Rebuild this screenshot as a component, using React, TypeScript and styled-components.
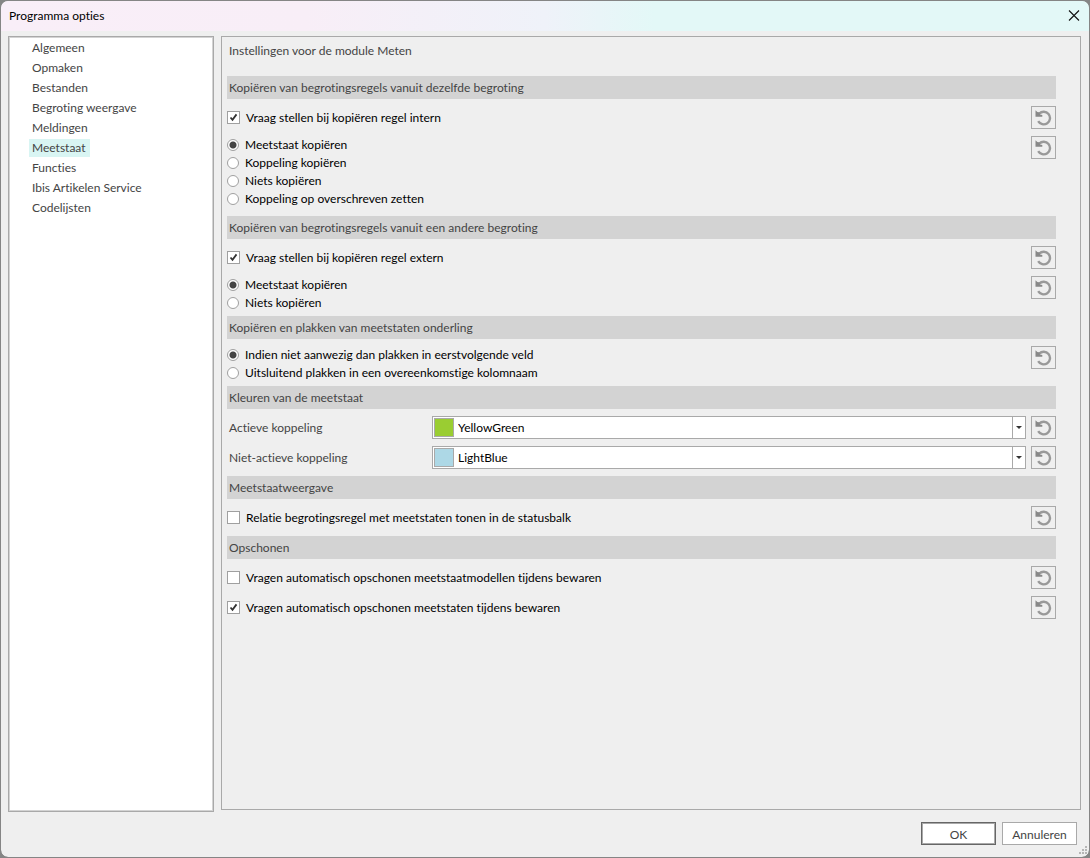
import React, { useId, useState } from "react";
import styled, { createGlobalStyle } from "styled-components";

const GlobalStyle = createGlobalStyle`
  *, *::before, *::after { box-sizing: border-box; }
  body {
    margin: 0;
    background: #858585;
    font-family: Lato, "Segoe UI", sans-serif;
    font-size: 12px;
    line-height: 16px;
    font-variant-ligatures: none;
    color: #000;
  }
  button, select, input { font: inherit; font-variant-ligatures: none; color: inherit; margin: 0; }
`;

const Dialog = styled.form`
  display: flex;
  flex-direction: column;
  height: 100vh;
  min-height: 700px;
  border: 1px solid #858585;
  border-radius: 8px;
  background: #efefef;
  background-clip: padding-box;
  overflow: hidden;
`;

const TitleBar = styled.header`
  display: flex;
  align-items: center;
  justify-content: space-between;
  height: 30px;
  padding: 0 8px;
  background: linear-gradient(90deg, #f9eef8 0%, #f8eef7 28%, #eff2f9 50%, #e3f8f7 60%, #e3f8f7 100%);
`;

const Title = styled.h1`
  margin: 0;
  font-size: 12px;
  font-weight: 400;
`;

const CloseButton = styled.button`
  display: flex;
  padding: 0 0 2px;
  border: 0;
  background: none;
`;

const Body = styled.div`
  flex: 1;
  display: flex;
  gap: 7px;
  min-height: 0;
  padding: 5px 8px 0 7px;
`;

const Sidebar = styled.nav`
  width: 206px;
  margin-bottom: -2px;
  padding: 0 0 0 20px;
  border: 1px solid #a9a9a9;
  box-shadow: inset 0 0 0 1px #d3d3d3;
  background: #fff;
`;

const NavList = styled.ul`
  margin: 0;
  padding: 1px 0 0;
  list-style: none;
`;

const NavItem = styled.li`
  display: flex;
  align-items: center;
  height: 20px;
`;

const NavLink = styled.a<{ $active?: boolean }>`
  padding: 1px 4px 1px 3px;
  color: #444;
  text-decoration: none;
  background: ${(p) => (p.$active ? "#d9f5f3" : "transparent")};
`;

const Panel = styled.main`
  flex: 1;
  min-width: 0;
  padding: 5px 24px 8px 5px;
  border: 1px solid #a9a9a9;
  overflow: auto;
`;

const Intro = styled.p`
  margin: 0;
  padding: 1px 2px 0;
  height: 34px;
  color: #444;
`;

const SectionTitle = styled.h2`
  margin: 0 0 7px;
  padding: 4px 2px 3px;
  font-size: 12px;
  font-weight: 400;
  color: #444;
  background: #d3d3d3;
`;

const Row = styled.div<{ $height?: number }>`
  display: flex;
  align-items: flex-start;
  gap: 5px;
  min-height: ${(p) => p.$height ?? 30}px;
`;

const RowContent = styled.div`
  flex: 1;
  min-width: 0;
`;

const OptionLabel = styled.label`
  display: flex;
  align-items: center;
  gap: 6px;
  width: fit-content;
  height: 23px;
`;

const CheckMarkBox = styled.span`
  display: grid;
  width: 13px;
  height: 13px;
  > * { grid-area: 1 / 1; }
  > svg { pointer-events: none; visibility: hidden; }
  > input:checked + svg { visibility: visible; }
`;

const CheckInput = styled.input`
  appearance: none;
  width: 13px;
  height: 13px;
  border: 1px solid #a0a0a0;
  background: #fff;
`;

const RadioGroup = styled.div`
  display: flex;
  flex-direction: column;
`;

const RadioLabel = styled.label`
  display: flex;
  align-items: center;
  gap: 6px;
  width: fit-content;
  height: 18px;
`;

const RadioInput = styled.input`
  appearance: none;
  width: 12px;
  height: 12px;
  border: 1px solid #a0a0a0;
  border-radius: 50%;
  background: #fff;
  &:checked { background: radial-gradient(circle, #444 0, #444 3px, #fff 4px); }
`;

const ResetButton = styled.button`
  display: flex;
  align-items: center;
  justify-content: center;
  flex: none;
  width: 25px;
  height: 23px;
  padding: 0;
  border: 1px solid #a9a9a9;
  background: #efefef;
`;

const FieldRow = styled.div`
  display: grid;
  grid-template-columns: 205px 1fr;
  align-items: center;
`;

const FieldLabel = styled.label`
  padding-left: 2px;
  color: #444;
`;

const SelectBox = styled.div`
  display: grid;
  grid-template-columns: 23px 1fr 13px;
  align-items: center;
  height: 23px;
  border: 1px solid #a9a9a9;
  background: #fff;
`;

const Swatch = styled.span<{ $color: string }>`
  grid-area: 1 / 1;
  width: 20px;
  height: 19px;
  margin-left: 1px;
  border: 1px solid #a9a9a9;
  background: ${(p) => p.$color};
  pointer-events: none;
  z-index: 1;
`;

const Select = styled.select`
  grid-area: 1 / 1 / 2 / 4;
  appearance: none;
  height: 21px;
  padding: 0 16px 0 25px;
  border: 0;
  background: transparent;
`;

const DropArrow = styled.span`
  grid-area: 1 / 3;
  display: flex;
  align-items: center;
  justify-content: center;
  height: 21px;
  border-left: 1px solid #a9a9a9;
  pointer-events: none;
`;

const Footer = styled.footer`
  position: relative;
  display: flex;
  justify-content: flex-end;
  gap: 6px;
  padding: 12px;
`;

const ActionButton = styled.button<{ $primary?: boolean }>`
  width: 75px;
  height: 23px;
  padding: 2px 0 0;
  border: 1px solid ${(p) => (p.$primary ? "#666" : "#a9a9a9")};
  box-shadow: ${(p) => (p.$primary ? "inset 0 0 0 1px #a9a9a9" : "none")};
  background: #fff;
  color: #444;
`;

const Grip = styled.svg`
  position: absolute;
  right: 1px;
  bottom: 2px;
`;

function ResetIcon() {
  return (
    <svg width="17" height="17" viewBox="0 0 17 17" aria-hidden="true">
      <path d="M4.2 4.6A6.3 6.3 0 1 1 3.2 12.1" fill="none" stroke="#999" strokeWidth="2.4" />
      <path d="M0.5 1.2v6.6h6.8V6L5 5.4 4.6 3.4 2.4 3z" fill="#888" />
    </svg>
  );
}

function Reset() {
  return (
    <ResetButton type="button" aria-label="Herstellen">
      <ResetIcon />
    </ResetButton>
  );
}

function CheckRow({ label, checked = false }: { label: string; checked?: boolean }) {
  return (
    <Row>
      <RowContent>
        <OptionLabel>
          <CheckMarkBox>
            <CheckInput type="checkbox" defaultChecked={checked} />
            <svg width="13" height="13" viewBox="0 0 13 13" aria-hidden="true">
              <path d="M3.5 6.5L5.5 8.8L9.5 3.4" fill="none" stroke="#333" strokeWidth="1.8" />
            </svg>
          </CheckMarkBox>
          {label}
        </OptionLabel>
      </RowContent>
      <Reset />
    </Row>
  );
}

function RadioRow({ options, height }: { options: string[]; height: number }) {
  const name = useId();
  return (
    <Row $height={height}>
      <RowContent>
        <RadioGroup role="radiogroup">
          {options.map((option, i) => (
            <RadioLabel key={option}>
              <RadioInput type="radio" name={name} defaultChecked={i === 0} />
              {option}
            </RadioLabel>
          ))}
        </RadioGroup>
      </RowContent>
      <Reset />
    </Row>
  );
}

function ColorRow({ label, initial }: { label: string; initial: string }) {
  const id = useId();
  const [color, setColor] = useState(initial);
  return (
    <Row>
      <RowContent>
        <FieldRow>
          <FieldLabel htmlFor={id}>{label}</FieldLabel>
          <SelectBox>
            <Swatch $color={color} />
            <Select id={id} value={color} onChange={(e) => setColor(e.target.value)}>
              <option>YellowGreen</option>
              <option>LightBlue</option>
            </Select>
            <DropArrow>
              <svg width="6" height="3" viewBox="0 0 6 3" aria-hidden="true">
                <path d="M0 0h6L3 3z" fill="#333" />
              </svg>
            </DropArrow>
          </SelectBox>
        </FieldRow>
      </RowContent>
      <Reset />
    </Row>
  );
}

const pages = [
  "Algemeen",
  "Opmaken",
  "Bestanden",
  "Begroting weergave",
  "Meldingen",
  "Meetstaat",
  "Functies",
  "Ibis Artikelen Service",
  "Codelijsten",
];

export default function App() {
  return (
    <>
      <GlobalStyle />
      <Dialog onSubmit={(e) => e.preventDefault()}>
        <TitleBar>
          <Title>Programma opties</Title>
          <CloseButton type="button" aria-label="Sluiten">
            <svg width="15" height="15" viewBox="0 0 15 15" aria-hidden="true">
              <path d="M3 2.5l10 10M13 2.5l-10 10" stroke="#111" strokeWidth="1.1" />
            </svg>
          </CloseButton>
        </TitleBar>
        <Body>
          <Sidebar>
            <NavList>
              {pages.map((page) => (
                <NavItem key={page}>
                  <NavLink href="#" $active={page === "Meetstaat"}>
                    {page}
                  </NavLink>
                </NavItem>
              ))}
            </NavList>
          </Sidebar>
          <Panel>
            <Intro>Instellingen voor de module Meten</Intro>

            <SectionTitle>Kopiëren van begrotingsregels vanuit dezelfde begroting</SectionTitle>
            <CheckRow label="Vraag stellen bij kopiëren regel intern" checked />
            <RadioRow
              height={80}
              options={[
                "Meetstaat kopiëren",
                "Koppeling kopiëren",
                "Niets kopiëren",
                "Koppeling op overschreven zetten",
              ]}
            />

            <SectionTitle>Kopiëren van begrotingsregels vanuit een andere begroting</SectionTitle>
            <CheckRow label="Vraag stellen bij kopiëren regel extern" checked />
            <RadioRow height={40} options={["Meetstaat kopiëren", "Niets kopiëren"]} />

            <SectionTitle>Kopiëren en plakken van meetstaten onderling</SectionTitle>
            <RadioRow
              height={40}
              options={[
                "Indien niet aanwezig dan plakken in eerstvolgende veld",
                "Uitsluitend plakken in een overeenkomstige kolomnaam",
              ]}
            />

            <SectionTitle>Kleuren van de meetstaat</SectionTitle>
            <ColorRow label="Actieve koppeling" initial="YellowGreen" />
            <ColorRow label="Niet-actieve koppeling" initial="LightBlue" />

            <SectionTitle>Meetstaatweergave</SectionTitle>
            <CheckRow label="Relatie begrotingsregel met meetstaten tonen in de statusbalk" />

            <SectionTitle>Opschonen</SectionTitle>
            <CheckRow label="Vragen automatisch opschonen meetstaatmodellen tijdens bewaren" />
            <CheckRow label="Vragen automatisch opschonen meetstaten tijdens bewaren" checked />
          </Panel>
        </Body>
        <Footer>
          <ActionButton type="submit" $primary>
            OK
          </ActionButton>
          <ActionButton type="button">Annuleren</ActionButton>
          <Grip width="10" height="10" viewBox="0 0 10 10" aria-hidden="true">
            <path
              d="M7 1h2v2h-2zM4 4h2v2h-2zM7 4h2v2h-2zM1 7h2v2h-2zM4 7h2v2h-2zM7 7h2v2h-2z"
              fill="#b5b5b5"
            />
          </Grip>
        </Footer>
      </Dialog>
    </>
  );
}
